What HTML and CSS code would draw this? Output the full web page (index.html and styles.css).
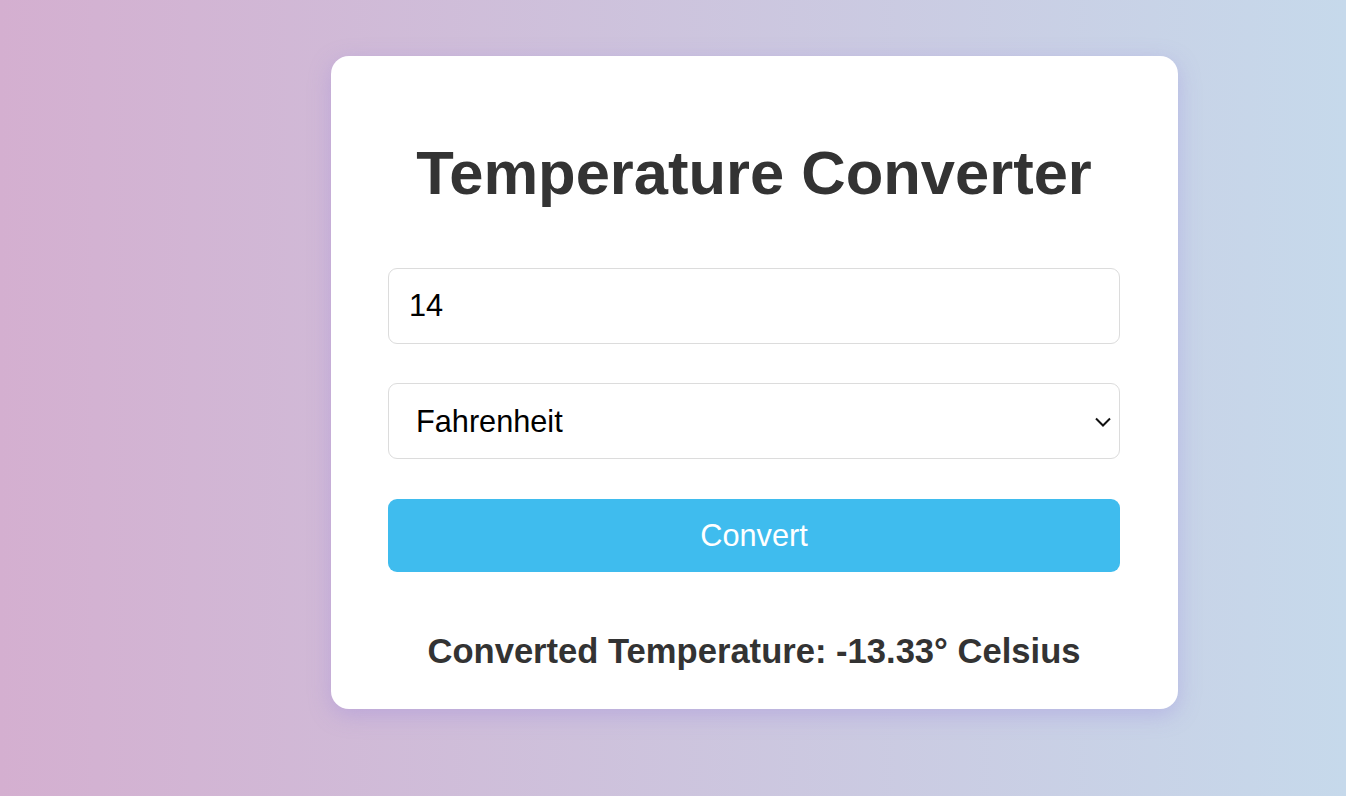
FILE: index.html
```html
<!DOCTYPE html>
<html lang="en">
<head>
<meta charset="utf-8">
<title>Temperature Converter</title>
<link rel="stylesheet" href="styles.css">
</head>
<body>
<main class="page">
  <section class="card">
    <h1 class="title">Temperature Converter</h1>
    <form class="form">
      <input class="field" type="text" value="14">
      <div class="select-wrap">
        <select class="field select">
          <option>Fahrenheit</option>
          <option>Celsius</option>
        </select>
        <svg class="chevron" width="18" height="10" viewBox="0 0 18 10"><path d="M2 1.5 L9 8.5 L16 1.5" fill="none" stroke="#111" stroke-width="2"/></svg>
      </div>
      <button class="btn" type="button">Convert</button>
    </form>
    <h2 class="result">Converted Temperature: -13.33° Celsius</h2>
  </section>
</main>
</body>
</html>
```

FILE: styles.css
```css
html, body {
  margin: 0;
  padding: 0;
}
body {
  min-height: 100vh;
  background: linear-gradient(to right, #d4afd0, #c6d9eb);
  font-family: "Liberation Sans", Arial, sans-serif;
}
.page {
  display: flex;
  padding: 56px 0 0 331px;
}
.card {
  width: 847px;
  box-sizing: border-box;
  background: #fff;
  border-radius: 18px;
  padding: 82px 58px 38px 57px;
  box-shadow: 0 6px 22px rgba(150, 130, 220, 0.35);
}
.title {
  margin: 0 0 60px;
  font-size: 61.5px;
  line-height: 70px;
  font-weight: bold;
  color: #333;
  text-align: center;
}
.form {
  display: flex;
  flex-direction: column;
}
.field {
  box-sizing: border-box;
  width: 100%;
  height: 76px;
  border: 1px solid #dcdcdc;
  border-radius: 9px;
  background: #fff;
  font-family: "Liberation Sans", Arial, sans-serif;
  font-size: 30.7px;
  color: #000;
  padding: 0 20px;
  margin: 0 0 39px;
  outline: none;
}
.select-wrap {
  position: relative;
  margin: 0 0 40px;
}
.select {
  margin: 0;
  appearance: none;
  -webkit-appearance: none;
  padding: 0 27px;
}
.chevron {
  position: absolute;
  right: 8px;
  top: 34px;
  width: 18px;
  height: 10px;
  pointer-events: none;
}
.btn {
  height: 73px;
  border: none;
  border-radius: 9px;
  background: #3fbcee;
  color: #fff;
  font-family: "Liberation Sans", Arial, sans-serif;
  font-size: 30.7px;
  cursor: pointer;
}
.result {
  margin: 59px 0 0;
  font-size: 34.6px;
  line-height: 40px;
  font-weight: bold;
  color: #333;
  text-align: center;
}
```
